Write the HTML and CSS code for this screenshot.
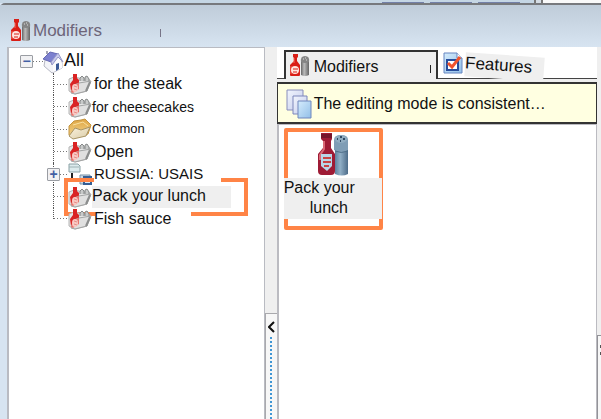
FILE: index.html
```html
<!DOCTYPE html>
<html lang="en">
<head>
<meta charset="utf-8">
<title>Modifiers</title>
<link rel="stylesheet" href="styles.css">
</head>
<body>
<svg class="defs" aria-hidden="true">
  <defs>
    <linearGradient id="glass" x1="0" y1="0" x2="1" y2="1"><stop offset="0" stop-color="#f2f5fd"/><stop offset="1" stop-color="#c4ccec"/></linearGradient>
    <linearGradient id="sky" x1="0" y1="0" x2="1" y2="1"><stop offset="0" stop-color="#d5ecfc"/><stop offset="1" stop-color="#92bfe8"/></linearGradient>
    <linearGradient id="steel"><stop offset="0" stop-color="#666"/><stop offset=".4" stop-color="#bbb"/><stop offset="1" stop-color="#666"/></linearGradient>
    <linearGradient id="bluesteel"><stop offset="0" stop-color="#5e819f"/><stop offset=".4" stop-color="#91afc6"/><stop offset="1" stop-color="#4d6c89"/></linearGradient>
    <linearGradient id="gold" x1="0" y1="0" x2="0" y2="1"><stop offset="0" stop-color="#dfa643"/><stop offset="1" stop-color="#f3d793"/></linearGradient>
    <linearGradient id="pale" x1="0" y1="0" x2="1" y2="1"><stop offset="0" stop-color="#fbf3df"/><stop offset="1" stop-color="#d9cba6"/></linearGradient>
    <symbol id="sauce" viewBox="0 0 20 24">
      <path d="M3 1h5v3l-1 1v3l3 4v10q0 1-1 1H1q-1 0-1-1V12l4-4V5L3 4z" fill="#d91e16"/>
      <path d="M1 13v8M4 5v5" stroke="#f56a58" fill="none"/>
      <ellipse cx="5" cy="17" rx="4" ry="4" fill="#ffe6df"/>
      <path d="M3 16h5M3 19h4" stroke="#d91e16"/>
      <path d="M11 8h8v14q-4 2-8 0z" fill="url(#steel)"/>
      <path d="M11 9q-1-6 4-6t4 6q-4 2-8 0z" fill="#858585"/>
      <path d="M13 6h1M15 5h1M16 7h1" stroke="#ddd"/>
    </symbol>
    <symbol id="folder" viewBox="0 0 24 22">
      <path d="M1 6l5-2 5 1 11 2-3 11-12 3-6-3z" fill="#e6e6e6" stroke="#b4b4b4"/>
      <path d="M12 8V5l2-2 2 2v3M17 8V4l2-1 2 3v3" fill="#c8caca" stroke="#858888"/>
      <path d="M5 1h4v4l2 2v5l-3 2-5 4-1-7 3-4z" fill="#da2424"/>
      <path d="M3 20l3-8 5-2 12-2-4 10-12 3z" fill="#dedede" fill-opacity=".75" stroke="#a2a4a4"/>
      <path d="M11 10v6l-6 4-2-1 2-7z" fill="#e9756e"/>
      <ellipse cx="7" cy="15" rx="3" ry="4" fill="#f9c9c4"/>
      <path d="M6 13l3 1M6 16l3 1" stroke="#e58d87"/>
      <path d="M22 9l-4 9" stroke="#8c8e8e" stroke-width="2"/>
    </symbol>
    <symbol id="goldfolder" viewBox="0 0 24 22">
      <path d="M1 8l5-5 7-1 4-1 6 6-3 9L6 20l-5-3z" fill="url(#gold)" stroke="#c4943f"/>
      <path d="M5 7l10-3 5 4" stroke="#f9e1a1" fill="none"/>
      <path d="M1 18l6-8 6 2 9-3-4 9-13 3z" fill="url(#pale)" stroke="#a89567"/>
    </symbol>
    <symbol id="home" viewBox="0 0 22 24">
      <path d="M3 10l8-2 9 4v6l-10 5-8-7z" fill="#f3f4f8" stroke="#b6b8c4"/>
      <path d="M11 22V14l5-7 4 6v5z" fill="#fbfbfe"/>
      <path d="M1 9l7-7 8 2-7 8z" fill="#7c80cf" stroke="#6669b4"/>
      <path d="M16 3l5 9-5-5-6 8-1-3z" fill="#c9caec" stroke="#9698c8"/>
      <path d="M14 14l3-1v6l-3 2z" fill="#3c5a97"/>
      <path d="M5 1v3" stroke="#a5a6b4" stroke-width="2"/>
    </symbol>
    <symbol id="network" viewBox="0 0 24 22">
      <path d="M1 1h9l2 2v6H1z" fill="#dcebed" stroke="#8ba2a6"/>
      <path d="M1 4h10" stroke="#9eb2b4"/>
      <path d="M4 10v6" stroke="#222" stroke-width="2" fill="none"/>
      <path d="M12 12h10v9H12z" fill="#c9d8e5" stroke="#7590a7"/>
      <path d="M16 14h7v7h-7z" fill="#d9e9fa" stroke="#345e94" stroke-width="2"/>
    </symbol>
  </defs>
</svg>

<div class="desktop"><i></i><i></i><i></i><b></b></div>
<main class="window">
  <header class="titlebar">
    <svg class="title-icon"><use href="#sauce"/></svg>
    <h1>Modifiers</h1><span class="tick"></span>
  </header>
  <div class="panes">
    <nav class="tree" aria-label="Modifier groups">
      <ul>
        <li class="root">
          <button class="toggle" aria-label="Collapse All">−</button>
          <svg class="home"><use href="#home"/></svg>
          <a class="all" href="#all">All</a>
        </li>
        <li><svg><use href="#folder"/></svg><a class="indent" href="#steak">for the steak</a></li>
        <li><svg><use href="#folder"/></svg><a class="small" href="#cheesecakes">for cheesecakes</a></li>
        <li><svg><use href="#goldfolder"/></svg><a class="tiny" href="#common">Common</a></li>
        <li><svg><use href="#folder"/></svg><a class="indent" href="#open">Open</a></li>
        <li class="branch"><button class="toggle" aria-label="Expand RUSSIA: USAIS">+</button><svg><use href="#network"/></svg><a class="indent medium" href="#russia">RUSSIA: USAIS</a></li>
        <li class="selected"><svg><use href="#folder"/></svg><a href="#lunch">Pack your lunch</a>
          <svg class="callout" viewBox="0 0 184 38"><path d="M30 2H2v34h29M157 2h25v34h-55"/></svg>
        </li>
        <li><svg><use href="#folder"/></svg><a class="indent" href="#fish">Fish sauce</a></li>
      </ul>
    </nav>
    <div class="splitter">
      <button class="collapse" aria-label="Collapse panel">
        <svg viewBox="0 0 7 12"><path d="M6 1L1 6l5 5"/></svg>
        <span class="grip"></span>
      </button>
    </div>
    <section class="content">
      <div class="tabs" role="tablist">
        <button class="tab active" role="tab" aria-selected="true"><svg class="tab-icon"><use href="#sauce"/></svg><span>Modifiers</span><i class="tick dark"></i></button>
        <button class="tab" role="tab" aria-selected="false">
          <svg class="check" viewBox="0 0 20 22"><path d="M1 1h13l5 5v15H1z" fill="url(#sky)" stroke="#6685c0"/><path d="M14 1v5h5" fill="#fff" stroke="#6685c0"/><path d="M4 8h11v10H4z" fill="#fff" stroke="#274d9c" stroke-width="2"/><path d="M5 11l4 4 8-10" fill="none" stroke="#f0522c" stroke-width="3"/></svg>
          <span class="features">Features</span>
        </button>
      </div>
      <div class="banner">
        <svg viewBox="0 0 26 30"><path d="M1 1h16v20H1z" fill="url(#glass)" stroke="#888dbb"/><path d="M7 7h14v18H7z" fill="url(#glass)" stroke="#7c86ba"/><path d="M12 12h13v17H12z" fill="url(#sky)" stroke="#7187bd"/></svg>
        <span>The editing mode is consistent…</span>
      </div>
      <div class="items">
        <button class="item">
          <svg viewBox="0 0 32 44"><path d="M4 1h11v6l-1 2v7l4 6v17q0 4-4 4H5q-4 0-4-4V22l5-6V9L4 7z" fill="#9e1b35"/><path d="M4 2h11v4H4z" fill="#76152b"/><path d="M7 9v8l-4 6v5" fill="none" stroke="#d96976" stroke-width="2"/><path d="M4 22h11v12l-5 5-6-5z" fill="#b9d5e7"/><path d="M6 26h8M6 30h8M7 34h5" stroke="#c94343" stroke-width="2"/><path d="M18 8h13v34q-6 3-13 0z" fill="url(#bluesteel)"/><path d="M17 8q0-5 7-5t7 5v10q-7 4-14 0z" fill="#7f9db5"/><ellipse cx="24" cy="7" rx="6" ry="4" fill="#90acc0"/><path d="M20 7h1M23 5h2M26 7h2M23 9h1" stroke="#314b65" stroke-width="2"/><path d="M18 19q6 3 13 0" fill="none" stroke="#4f6f89"/></svg>
          <span class="item-label">Pack your<span>lunch</span></span>
        </button>
      </div>
    </section>
    <aside class="edge"><span></span></aside>
  </div>
</main>
</body>
</html>
```

FILE: styles.css
```css
* { box-sizing: border-box; }

body {
  margin: 0;
  min-height: 100vh;
  display: flex;
  flex-direction: column;
  overflow: hidden;
  background: #d7e4f1;
  color: #111;
  font: 16px/20px "Liberation Sans", sans-serif;
}

svg { display: block; flex: none; }
ul, h1 { margin: 0; padding: 0; }
a { color: inherit; text-decoration: none; }
button { margin: 0; padding: 0; border: 0; background: none; color: inherit; font: inherit; }
.defs { position: absolute; width: 0; height: 0; }

.desktop { height: 3px; display: flex; justify-content: flex-end; align-items: flex-end; gap: 6px; background: #c5d6e4; }
.desktop i { width: 42px; height: 1px; background: #7380a8; }
.desktop b { width: 67px; height: 3px; margin-left: 8px; border-left: 2px solid #777; background: linear-gradient(90deg, #d5dde5 5px, #777 5px 7px, #f9f9f9 7px); }

.window { flex: 1; display: flex; flex-direction: column; border-top: 2px solid #77797d; border-top-left-radius: 5px; }
.titlebar { height: 42px; padding: 13px 0 0 11px; display: flex; gap: 2px; background: linear-gradient(#bfccd9, #d7e4f1); }
.title-icon { width: 20px; height: 24px; }
h1 { flex: 0 0 125px; padding-top: 3px; color: #6d6579; font-size: 17px; font-weight: 400; line-height: 20px; }
.tick { width: 1px; height: 8px; margin-top: 11px; background: #777487; }

.panes { flex: 1; display: flex; padding-left: 7px; }
.tree { flex: 256 1 0; padding-top: 2px; border: solid #b9bbc2; border-width: 1px 1px 0 2px; background: #fff; }
ul { list-style: none; }
li { position: relative; height: 22px; padding-left: 59px; display: flex; align-items: center; white-space: nowrap; }
li:nth-child(odd) { height: 23px; }
li svg { width: 24px; height: 22px; }
li::before { content: ""; position: absolute; left: 44px; top: 0; width: 15px; height: 100%; border-left: 1px dotted #555; background: repeating-linear-gradient(90deg, #777 0 1px, transparent 1px 3px) 0 50% / 100% 1px no-repeat; }
li:last-child::before { height: 50%; background-position: 0 100%; }
.root { padding-left: 11px; }
.root::before { left: 24px; width: 10px; border: 0; }
.toggle { position: relative; width: 13px; height: 13px; border: 1px solid #9a9da3; border-radius: 1px; background: #f1f1f3; color: #4360a5; font-size: 14px; font-weight: 700; line-height: 9px; }
.root .home { width: 22px; height: 24px; margin-left: 9px; }
.branch { padding-left: 38px; }
.branch .toggle { margin-right: 8px; }
.all { font-size: 18px; padding-bottom: 4px; }
.indent { padding-left: 2px; }
.medium { font-size: 15px; }
.small { font-size: 14px; }
.tiny { font-size: 13px; }
.selected a { width: 139px; height: 22px; line-height: 20px; background: #efefef; }
.selected .callout { position: absolute; left: 55px; top: -7px; width: 184px; height: 38px; fill: none; stroke: #ff8446; stroke-width: 4px; pointer-events: none; }
li:last-child a { position: relative; }

.splitter { flex: none; width: 12px; display: flex; flex-direction: column; padding-top: 266px; background: #efefef; }
.collapse { flex: 1; padding-top: 7px; display: flex; flex-direction: column; align-items: center; gap: 4px; border: 1px solid #a9a9ad; border-width: 1px 0 0 1px; background: #f7f7f7; }
.collapse svg { width: 7px; height: 12px; fill: none; stroke: #111; stroke-width: 2px; }
.grip { flex: 1; width: 2px; background: repeating-linear-gradient(#4096d5 0 2px, transparent 2px 4px); }

.content { flex: 322 1 0; display: flex; flex-direction: column; background: #fff; }
.tabs { height: 35px; padding: 3px 0 3px 7px; display: flex; background: linear-gradient(#fff 31px, #444 31px 32px, #eee 32px); }
.tab { display: flex; gap: 4px; padding-left: 5px; }
.tab.active { width: 154px; padding: 0 5px 0 4px; border: 2px solid #333; border-bottom: 0; background: #efefef; }
.tab.active span { flex: 1; padding-top: 5px; text-align: left; }
.tab-icon { width: 20px; height: 24px; margin-top: 1px; }
.tick.dark { margin-top: 13px; background: #222; }
.check { width: 20px; height: 22px; margin-top: 2px; }
.tab:not(.active) { gap: 2px; }
.features { height: 24px; margin-top: 5px; padding-right: 12px; background: #efefef; font-size: 17px; line-height: 22px; transform: rotate(4deg); }
.banner { min-height: 42px; padding: 2px 8px 0; display: flex; align-items: center; gap: 2px; border: solid #333; border-width: 2px 1px 2px 1px; background: #ffffe1; white-space: nowrap; }
.banner svg { width: 26px; height: 30px; }
.items { flex: 1; padding: 3px 0 0 5px; border: solid #bbbbc1; border-width: 1px 1px 0 2px; }
.item { width: 99px; height: 102px; display: flex; flex-direction: column; align-items: center; border: 4px solid #ff8446; border-radius: 2px; }
.item svg { width: 32px; height: 44px; }
.item-label { align-self: stretch; margin: 2px -3px 0 -4px; padding-bottom: 1px; background: #efefef; text-align: left; }
.item-label span { display: block; padding-left: 26px; }

.edge { flex: 0 0 4px; padding-top: 288px; background: #efefef; display: flex; }
.edge span { flex: 1; border: solid #939398; border-width: 1px 0 0 1px; background: linear-gradient(#f7f7f7 9px, #555 9px 12px, #f7f7f7 12px 16px, #555 16px 19px, #f7f7f7 19px) 2px 0 no-repeat #f7f7f7; }
```
